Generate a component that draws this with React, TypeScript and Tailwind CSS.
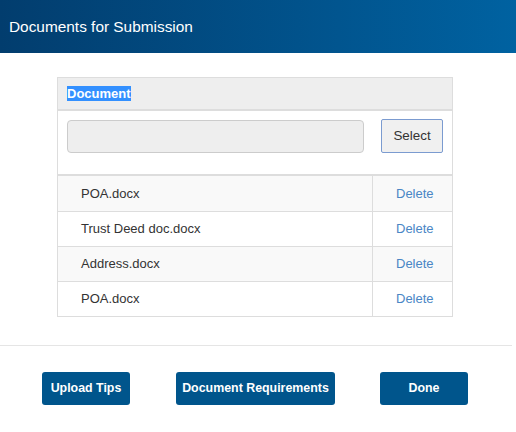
const files = ["POA.docx", "Trust Deed doc.docx", "Address.docx", "POA.docx"];

export default function App() {
  return (
    <div className="w-[516px] h-[432px] bg-white font-['Liberation_Sans',Arial,sans-serif] text-[#333]">
      <div className="h-[53px] flex items-center pl-[9px] bg-gradient-to-r from-[#023d6e] to-[#0062a1]">
        <h1 className="text-[15.4px] text-white">Documents for Submission</h1>
      </div>

      <div className="pt-[24px] px-[57px] pb-[28px]">
        <div className="w-[396px] border border-[#dddddd]">
          <div className="h-[33px] flex items-center px-[9px] bg-[#eeeeee] border-b-2 border-[#dddddd]">
            <span className="text-[13px] font-bold bg-[#3390ff] text-white leading-[15px]">Document</span>
          </div>
          <div className="h-[65px] flex items-start pt-[8px] px-[9px] border-b-2 border-[#dddddd]">
            <div className="w-[297px] h-[33px] mt-[1px] rounded-[4px] border border-[#cccccc] bg-[#eeeeee]" />
            <button className="ml-auto w-[62px] h-[34px] rounded-[2px] border border-[#7b9bd0] bg-[#f0f0f0] text-[13.4px] text-[#333]">
              Select
            </button>
          </div>
          {files.map((f, i) => (
            <div
              key={`${f}-${i}`}
              className={`flex h-[35px] text-[13px] ${i > 0 ? "border-t border-[#dddddd]" : ""} ${
                i % 2 === 0 ? "bg-[#f9f9f9]" : "bg-white"
              }`}
            >
              <div className="flex-1 flex items-center pl-[23px] border-r border-[#dddddd]">{f}</div>
              <div className="w-[79px] flex items-center pl-[23px] text-[#4a86c5]">Delete</div>
            </div>
          ))}
        </div>
      </div>

      <div className="w-[512px] border-t border-[#e5e5e5]" />

      <div className="flex items-start pt-[26px]">
        <button className="ml-[42px] w-[88px] h-[33px] rounded-[3px] bg-[#00558c] text-white text-[12.4px] font-bold">
          Upload Tips
        </button>
        <button className="ml-[46px] w-[159px] h-[33px] rounded-[3px] bg-[#00558c] text-white text-[12.4px] font-bold">
          Document Requirements
        </button>
        <button className="ml-[45px] w-[88px] h-[33px] rounded-[3px] bg-[#00558c] text-white text-[12.4px] font-bold">
          Done
        </button>
      </div>
    </div>
  );
}
